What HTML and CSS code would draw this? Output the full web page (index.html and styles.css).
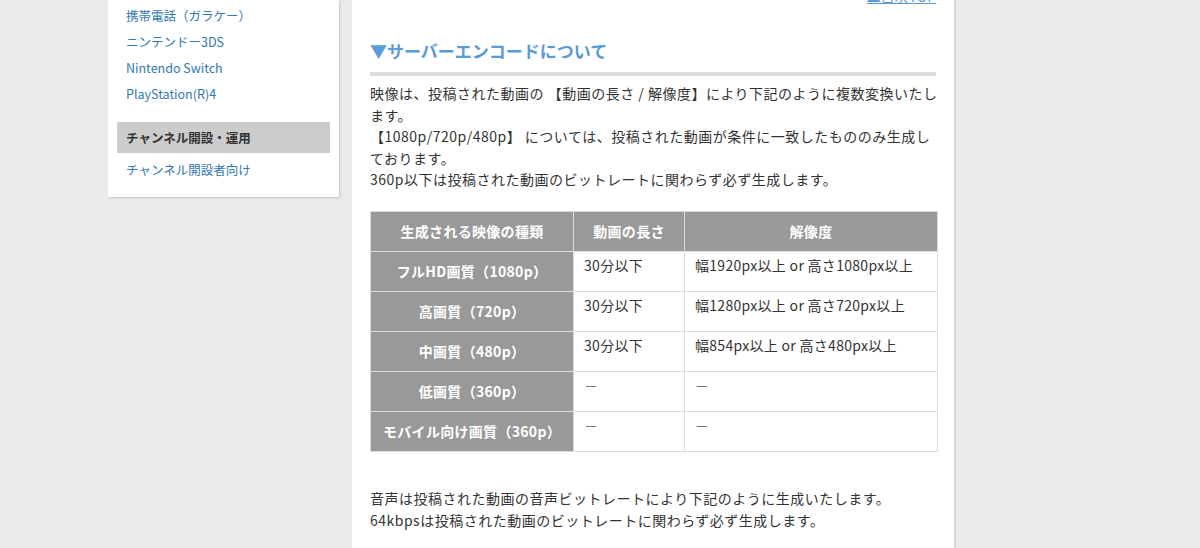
FILE: index.html
```html
<!DOCTYPE html>
<html lang="ja">
<head>
<meta charset="utf-8">
<link rel="stylesheet" href="styles.css">
</head>
<body>
<div class="wrap">
  <aside class="side">
    <ul class="menu">
      <li><a href="#">携帯電話（ガラケー）</a></li>
      <li><a href="#">ニンテンドー3DS</a></li>
      <li><a href="#">Nintendo Switch</a></li>
      <li><a href="#">PlayStation(R)4</a></li>
    </ul>
    <div class="menu-head">チャンネル開設・運用</div>
    <ul class="menu menu-last">
      <li><a href="#">チャンネル開設者向け</a></li>
    </ul>
  </aside>
  <main class="main">
    <div class="totop"><a href="#">▲目次TOP</a></div>
    <h2 class="heading">▼サーバーエンコードについて</h2>
    <p class="text text-intro">映像は、投稿された動画の 【動画の長さ / 解像度】により下記のように複数変換いたします。<br>【1080p/720p/480p】 については、投稿された動画が条件に一致したもののみ生成しております。<br>360p以下は投稿された動画のビットレートに関わらず必ず生成します。</p>
    <table class="spec">
      <colgroup><col class="c1"><col class="c2"><col class="c3"></colgroup>
      <tr><th>生成される映像の種類</th><th>動画の長さ</th><th>解像度</th></tr>
      <tr><th>フルHD画質（1080p）</th><td>30分以下</td><td>幅1920px以上 or 高さ1080px以上</td></tr>
      <tr><th>高画質（720p）</th><td>30分以下</td><td>幅1280px以上 or 高さ720px以上</td></tr>
      <tr><th>中画質（480p）</th><td>30分以下</td><td>幅854px以上 or 高さ480px以上</td></tr>
      <tr><th>低画質（360p）</th><td class="dash">－</td><td class="dash">－</td></tr>
      <tr><th>モバイル向け画質（360p）</th><td class="dash">－</td><td class="dash">－</td></tr>
    </table>
    <p class="text text-audio">音声は投稿された動画の音声ビットレートにより下記のように生成いたします。<br>64kbpsは投稿された動画のビットレートに関わらず必ず生成します。</p>
  </main>
</div>
</body>
</html>
```
FILE: styles.css
```css
html, body {
  margin: 0;
  padding: 0;
  height: 100%;
  overflow: hidden;
}
body {
  background: #ebebeb;
  font-family: "Noto Sans CJK JP", "Noto Sans", sans-serif;
  color: #333;
}
.wrap {
  display: flex;
  align-items: flex-start;
  gap: 13px;
  padding-left: 108px;
  height: 100%;
}
.side {
  width: 231px;
  background: #fff;
  box-shadow: 1px 1px 2px rgba(0,0,0,0.18);
  padding: 3px 0 14px;
  box-sizing: border-box;
}
.menu {
  list-style: none;
  margin: 0;
  padding: 0;
}
.menu li {
  height: 26px;
  line-height: 26px;
  padding-left: 18px;
  font-size: 12.5px;
}
.menu a {
  color: #3278b2;
  text-decoration: none;
}
.menu-head {
  margin: 15px 9px 4px;
  height: 31px;
  line-height: 31px;
  background: #cccccc;
  padding-left: 9px;
  font-size: 12.5px;
  font-weight: bold;
  color: #333;
}
.main {
  width: 604px;
  height: 100%;
  box-sizing: border-box;
  background: #fff;
  border-right: 2px solid #d8d8d8;
  padding: 0 18px;
}
.totop {
  text-align: right;
  margin-top: -14px;
  height: 20px;
  line-height: 20px;
  font-size: 14px;
}
.totop a {
  color: #5b9bd5;
}
.heading {
  margin: 32px 0 0;
  font-size: 17px;
  font-weight: bold;
  color: #5b9bd5;
  line-height: 26px;
  padding-bottom: 8px;
  border-bottom: 4px solid #dddddd;
}
.text {
  margin: 7px 0 0;
  font-size: 14px;
  line-height: 21.6px;
  letter-spacing: 0.5px;
  color: #333;
}
.text-intro {
  margin-right: -3px;
}
.spec {
  margin-top: 20px;
  width: 568px;
  border-collapse: collapse;
  table-layout: fixed;
  font-size: 14px;
}
.c1 { width: 203px; }
.c2 { width: 111px; }
.spec th, .spec td {
  border: 1px solid #dddddd;
  height: 40px;
  box-sizing: border-box;
}
.spec th {
  background: #999999;
  color: #fff;
  font-weight: bold;
  text-align: center;
  vertical-align: middle;
  padding: 0 2px;
  white-space: nowrap;
  letter-spacing: 0.3px;
}
.spec td {
  vertical-align: top;
  padding: 2px 10px 0;
  line-height: 22px;
  color: #333;
  letter-spacing: 0.3px;
}
.spec td.dash {
  color: #777;
}
.text-audio {
  margin-top: 36px;
}
```
